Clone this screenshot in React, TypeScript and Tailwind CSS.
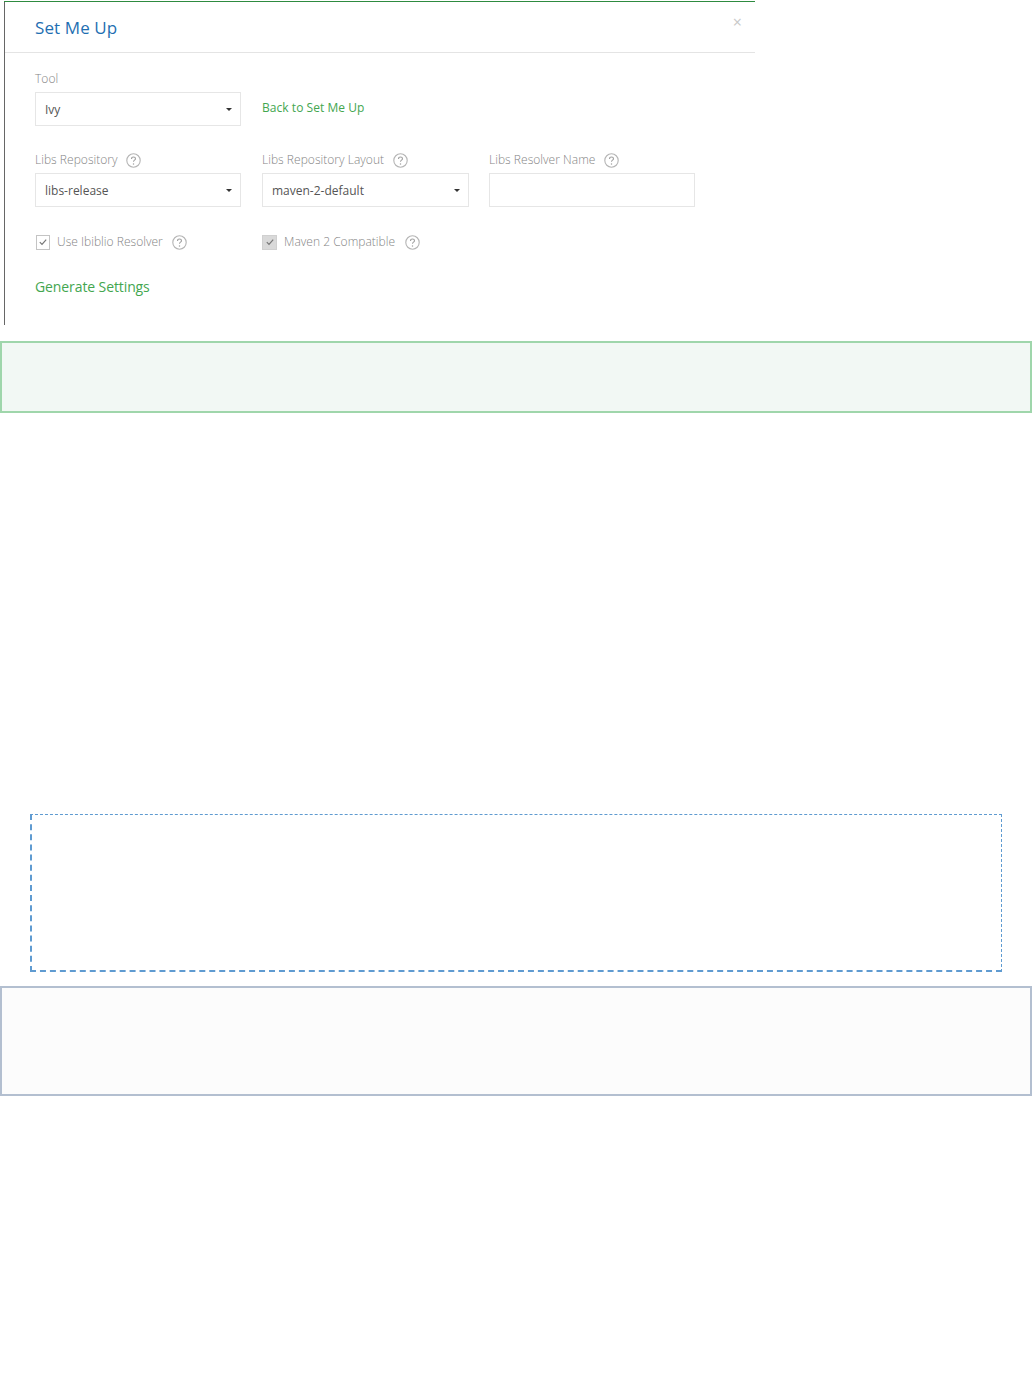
import React from "react";

const font = "font-['Open_Sans',sans-serif]";

function Help() {
  return (
    <svg width="15" height="15" viewBox="0 0 15 15" className="shrink-0" aria-hidden="true">
      <circle cx="7.5" cy="7.5" r="6.7" fill="none" stroke="#b5b5b5" strokeWidth="1.1" />
      <path d="M5.5 5.9c0-1.2.9-1.9 2-1.9s2 .7 2 1.7c0 1.4-2 1.5-2 3" fill="none" stroke="#a0a0a0" strokeWidth="1.1" />
      <circle cx="7.5" cy="11" r=".75" fill="#a0a0a0" />
    </svg>
  );
}

function Label({ children, help = true }: { children: React.ReactNode; help?: boolean }) {
  return (
    <div className="flex h-[16px] items-center gap-[8.5px] text-[12px] font-light leading-[16px] tracking-[0.03px] text-[#858585]">
      <span>{children}</span>
      {help && <Help />}
    </div>
  );
}

function Select({ value }: { value: string }) {
  return (
    <div className="mt-[5px] flex h-[34px] w-full items-center justify-between border border-[#e6e6e6] pl-[9px] pr-[8px] text-[12px] text-[#555555]">
      <span className="mt-[2px]">{value}</span>
      <span className="h-0 w-0 border-x-[3px] border-t-[3px] border-x-transparent border-t-[#333333]" />
    </div>
  );
}

function Check({ label, filled }: { label: string; filled?: boolean }) {
  return (
    <div className="flex items-center text-[12px] font-light tracking-[0.02px] text-[#858585]">
      <span className={`flex items-center justify-center border ${filled ? "h-[15px] w-[15px] border-[#d0d0d0] bg-[#d9d9d9]" : "ml-[1px] h-[15px] w-[14px] border-[#c4c4c4] bg-white"}`}>
        <svg width="10" height="10" viewBox="0 0 10 10" aria-hidden="true">
          <path d="M1.8 5.2 4 7.4 8.2 2.6" fill="none" stroke="#777777" strokeWidth="1.2" />
        </svg>
      </span>
      <span className="ml-[7px] mr-[9.5px]">{label}</span>
      <Help />
    </div>
  );
}

export default function App() {
  return (
    <div className={`${font} min-h-[1392px] bg-white pt-[1px]`}>
      <div className="ml-[4px] w-[751px] border-t border-solid border-[#2e8b40]">
        <div className="h-[323px] border-l border-solid border-[#666666]">
          <div className="relative flex h-[51px] items-center border-b border-[#e4e4e4] pl-[30px]">
            <h1 className="mt-[2px] text-[17px] tracking-[0.1px] text-[#1f6fb2]">Set Me Up</h1>
            <span className="absolute right-[13px] top-[12px] text-[16px] leading-[16px] text-[#c8c8c8]">×</span>
          </div>
          <div className="pl-[30px] pt-[18px]">
            <div className="grid grid-cols-[206px_207px_206px] gap-x-[21px]">
              <div>
                <Label help={false}>Tool</Label>
                <Select value="Ivy" />
              </div>
              <div className="flex items-end">
                <span className="flex h-[34px] items-center pb-[2px] text-[12px] font-medium tracking-[0.05px] text-[#43a64f]">Back to Set Me Up</span>
              </div>
              <div />
            </div>
            <div className="mt-[26px] grid grid-cols-[206px_207px_206px] gap-x-[21px]">
              <div>
                <Label>Libs Repository</Label>
                <Select value="libs-release" />
              </div>
              <div>
                <Label>Libs Repository Layout</Label>
                <Select value="maven-2-default" />
              </div>
              <div className="-ml-[1px]">
                <Label>Libs Resolver Name</Label>
                <div className="mt-[5px] h-[34px] w-[206px] border border-[#e6e6e6]" />
              </div>
            </div>
            <div className="mt-[26px] grid grid-cols-[206px_207px] gap-x-[21px]">
              <Check label="Use Ibiblio Resolver" />
              <Check label="Maven 2 Compatible" filled />
            </div>
            <div className="mt-[26px] text-[14px] leading-[20px] tracking-[-0.1px] text-[#43a64f]">Generate Settings</div>
          </div>
        </div>
      </div>
      <div className="mt-[16px] h-[72px] w-[1032px] border-2 border-[#9fd6ab] bg-[#f2f8f4]" />
      <div className="ml-[30px] mt-[401px] h-[158px] w-[972px] border border-b-2 border-l-2 border-dashed border-[#5f9bd1]" />
      <div className="mt-[14px] h-[110px] w-[1032px] border-2 border-[#b3bfd0] bg-[#fcfcfc]" />
    </div>
  );
}
